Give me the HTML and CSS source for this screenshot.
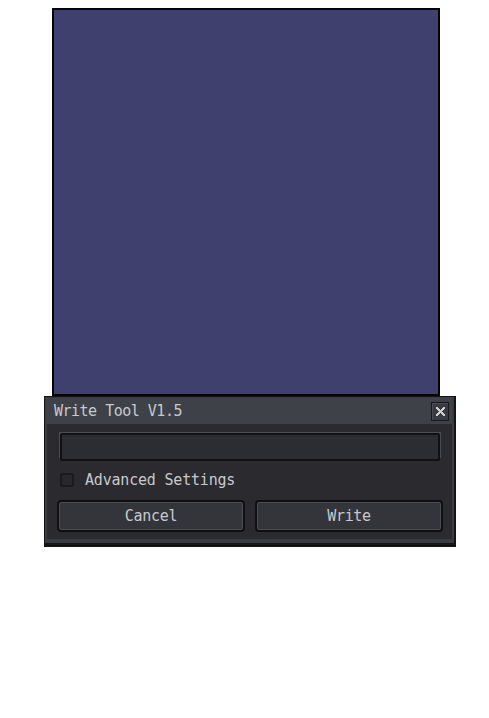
FILE: index.html
```html
<!DOCTYPE html>
<html>
<head>
<meta charset="utf-8">
<link rel="stylesheet" href="styles.css">
</head>
<body>
<div class="canvas"></div>
<div class="dialog">
  <div class="frame">
    <div class="titlebar">
      <span class="title">Write Tool V1.5</span>
      <button class="close" aria-label="Close">
        <svg width="11" height="11" viewBox="0 0 11 11" shape-rendering="crispEdges">
          <path d="M1 1h2v1h1v1h1v1h1v-1h1v-1h1v-1h2v2h-1v1h-1v1h-1v1h1v1h1v1h1v2h-2v-1h-1v-1h-1v-1h-1v1h-1v1h-1v1h-2v-2h1v-1h1v-1h1v-1h-1v-1h-1v-1h-1z" fill="#cfcfd2"/>
        </svg>
      </button>
    </div>
    <div class="content">
      <div class="field"></div>
      <label class="check-row">
        <span class="checkbox"></span>
        <span class="label">Advanced Settings</span>
      </label>
      <div class="buttons">
        <button class="btn">Cancel</button>
        <button class="btn">Write</button>
      </div>
    </div>
  </div>
</div>
</body>
</html>
```
FILE: styles.css
```css
* { box-sizing: border-box; }
html, body { background: #ffffff; }
body {
  margin: 8px;
  font-family: "DejaVu Sans Mono", "Liberation Mono", monospace;
}
.canvas {
  margin-left: 44px;
  width: 388px;
  height: 388px;
  background: #40406e;
  border: 2px solid #050508;
}
.dialog {
  margin-left: 36px;
  width: 412px;
  border: 1px solid #141417;
  border-right-width: 2px;
  border-bottom-width: 4px;
  background: #141417;
}
.frame {
  border: 2px solid #3b3c42;
  border-top-width: 1px;
  border-bottom-width: 4px;
  background: #2a2a2f;
}
.titlebar {
  height: 26px;
  background: #3e4148;
  display: flex;
  align-items: center;
  justify-content: space-between;
  padding: 0 3px 0 7px;
}
.title {
  color: #c9c9cc;
  font-size: 15px;
  letter-spacing: -0.5px;
  line-height: 26px;
}
.close {
  width: 18px;
  height: 19px;
  margin-top: 1px;
  padding: 0;
  border: 1px solid #18181b;
  background: #393b41;
  box-shadow: inset 1px 1px 0 #4a4c53;
  display: flex;
  align-items: center;
  justify-content: center;
}
.content {
  padding: 8px 9px 7px 10px;
}
.field {
  margin: 0 2px 0 2px;
  height: 26px;
  border: 1px solid #4a4c53;
  background: #4a4c53;
}
.field::before {
  content: "";
  display: block;
  height: 24px;
  border: 2px solid #111114;
  border-radius: 2px;
  background: #2c2d32;
}
.check-row {
  display: flex;
  align-items: center;
  gap: 11px;
  margin: 14px 0 0 3px;
  height: 16px;
}
.checkbox {
  width: 14px;
  height: 14px;
  border: 2px solid #1b1b1f;
  border-radius: 3px;
  background: #27272c;
}
.label {
  color: #c9c9cc;
  font-size: 15px;
  letter-spacing: -0.2px;
  line-height: 16px;
}
.buttons {
  display: flex;
  gap: 10px;
  margin-top: 12px;
}
.btn {
  flex: 1;
  height: 32px;
  border: 2px solid #101013;
  border-radius: 4px;
  background: #34353b;
  box-shadow: inset 0 0 0 1px #4b4d54;
  color: #c9c9cc;
  font-family: "DejaVu Sans Mono", "Liberation Mono", monospace;
  font-size: 15px;
  letter-spacing: -0.3px;
  padding: 0;
}
```
